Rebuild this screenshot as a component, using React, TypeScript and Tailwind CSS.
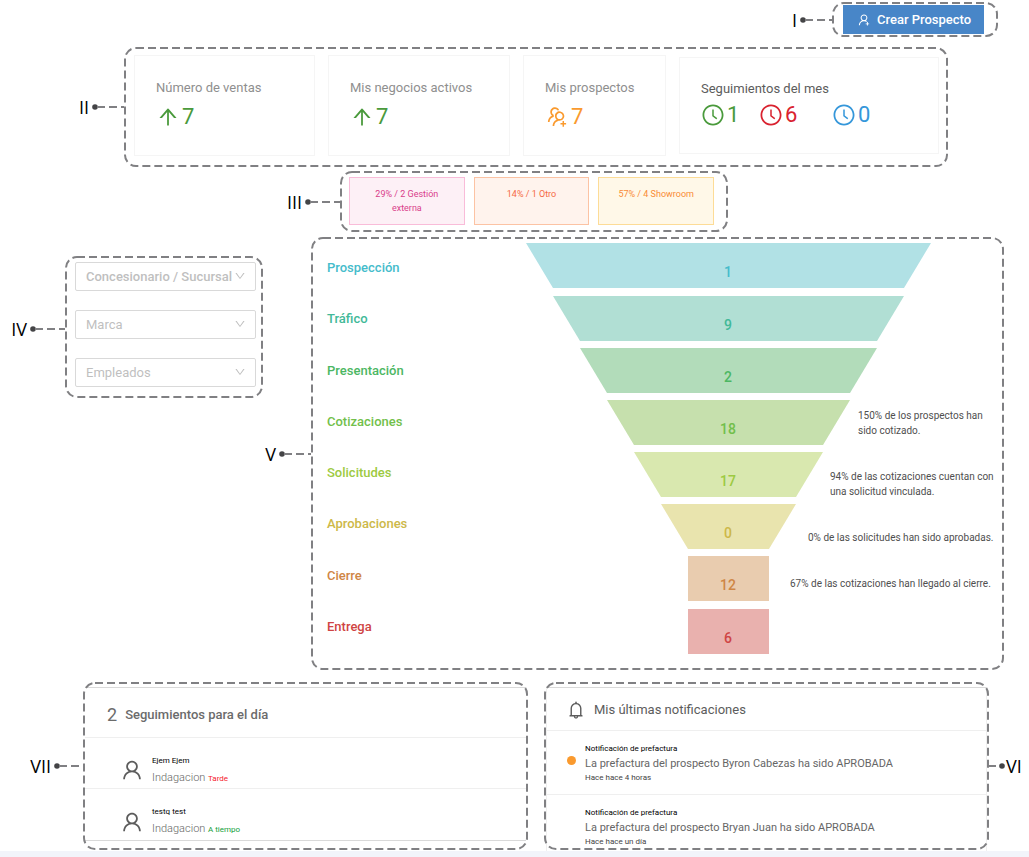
import type { ReactNode } from "react";
import {
  AiOutlineArrowUp,
  AiOutlineBell,
  AiOutlineClockCircle,
  AiOutlineDown,
  AiOutlineUser,
  AiOutlineUserAdd,
  AiOutlineUsergroupAdd,
} from "react-icons/ai";

const DASH = "8 4";
const DASH_COLOR = "#808083";

/** Rounded dashed outline drawn over the edge of a section. */
function Frame({ className, children }: { className: string; children: ReactNode }) {
  return (
    <section className={`relative ${className}`}>
      {children}
      <svg className="pointer-events-none absolute inset-px h-[calc(100%-2px)] w-[calc(100%-2px)] overflow-visible" aria-hidden="true">
        <rect width="100%" height="100%" rx="11" fill="none" stroke={DASH_COLOR} strokeWidth="2" strokeDasharray={DASH} />
      </svg>
    </section>
  );
}

function Leader({ width }: { width: string }) {
  return (
    <svg className={`h-2 shrink-0 ${width}`} aria-hidden="true">
      <circle cx="3" cy="4" r="2.8" fill="#444446" />
      <path d="M5 4H40" stroke={DASH_COLOR} strokeWidth="2" strokeDasharray={DASH} />
    </svg>
  );
}

function Callout({ label, className, leader = "w-8" }: { label: string; className: string; leader?: string }) {
  return (
    <div className={`flex shrink-0 items-center justify-end gap-[3px] ${className}`}>
      <span className="font-['Open_Sans',sans-serif] text-[18px] leading-6 text-black">{label}</span>
      <Leader width={leader} />
    </div>
  );
}

function StatCard({ title, value, color, icon }: { title: string; value: number; color: string; icon: ReactNode }) {
  return (
    <article className="h-[101px] border border-[#f5f5f5] pt-[22px] pl-[21px]">
      <h2 className="text-[13px] leading-5 text-[#8f8f8f]">{title}</h2>
      <p className={`flex items-center gap-[2px] pt-[5px] text-[22px] leading-7 ${color}`}>
        {icon}
        {value}
      </p>
    </article>
  );
}

const sources = [
  { text: "29% / 2 Gestión externa", style: "border-[#f9bcd9] bg-[#fdf0f6] text-[#d9408b]" },
  { text: "14% / 1 Otro", style: "border-[#fcc3a4] bg-[#fff3ed] text-[#f56a45]" },
  { text: "57% / 4 Showroom", style: "border-[#fddc97] bg-[#fff8e8] text-[#f98b35]" },
];

const filters = [
  { label: "Concesionario / Sucursal", weight: "font-medium" },
  { label: "Marca", weight: "font-normal" },
  { label: "Empleados", weight: "font-normal" },
];

const stages = [
  { name: "Prospección", value: 1, text: "text-[#45bccb]", color: "#45bccb", fill: "#b1e1e5", points: "0,0 405,0 378,45 27,45" },
  { name: "Tráfico", value: 9, text: "text-[#42b998]", color: "#42b998", fill: "#b1dfd4", points: "27,53 378,53 351,98 54,98" },
  { name: "Presentación", value: 2, text: "text-[#4cb763]", color: "#4cb763", fill: "#b2dcba", points: "54,105 351,105 324,150 81,150" },
  { name: "Cotizaciones", value: 18, text: "text-[#72bf4b]", color: "#72bf4b", fill: "#c6e0ad", points: "81,157 324,157 297,202 108,202" },
  { name: "Solicitudes", value: 17, text: "text-[#9dca42]", color: "#9dca42", fill: "#d9e8af", points: "108,209 297,209 270,254 135,254" },
  { name: "Aprobaciones", value: 0, text: "text-[#cdb849]", color: "#cdb849", fill: "#e9e4ae", points: "135,261 270,261 243,306 162,306" },
  { name: "Cierre", value: 12, text: "text-[#cf8646]", color: "#cf8646", fill: "#e9ccaf", points: "162,313 243,313 243,358 162,358" },
  { name: "Entrega", value: 6, text: "text-[#cf4444]", color: "#cf4444", fill: "#e9b1ae", points: "162,366 243,366 243,411 162,411" },
];
const stageTops = [0, 53, 105, 157, 209, 261, 313, 366];

const notes = [
  { text: "150% de los prospectos han sido cotizado.", indent: "pl-[332px] pr-4" },
  { text: "94% de las cotizaciones cuentan con una solicitud vinculada.", indent: "pl-[304px] pr-1" },
  { text: "0% de las solicitudes han sido aprobadas.", indent: "pl-[282px]" },
  { text: "67% de las cotizaciones han llegado al cierre.", indent: "pl-[264px]" },
];

const followUps = [
  { name: "Ejem Ejem", status: "Tarde", color: "text-[#f5222d]" },
  { name: "testq test", status: "A tiempo", color: "text-[#12a03a]" },
];

const notifications = [
  { text: "La prefactura del prospecto Byron Cabezas ha sido APROBADA", when: "Hace hace 4 horas", unread: true },
  { text: "La prefactura del prospecto Bryan Juan ha sido APROBADA", when: "Hace hace un día", unread: false },
];

const monthly = [
  { value: 1, color: "text-[#4a9a3c]", space: "w-[58px]" },
  { value: 6, color: "text-[#d9222f]", space: "w-[73px]" },
  { value: 0, color: "text-[#3597da]", space: "w-[58px]" },
];

export default function App() {
  return (
    <main className="flex min-h-screen flex-col bg-white pt-[2px] font-[Roboto,sans-serif]">
      <div className="flex justify-end pr-[31px]">
        <Callout label="I" className="w-16" />
        <Frame className="flex items-center py-[3px] pr-[14px] pl-[11px]">
          <button className="flex h-[29px] w-[141px] items-center gap-[6px] bg-[#4886c8] pl-[14px] text-[13px] font-medium text-white">
            <AiOutlineUserAdd className="size-[14px]" />
            <span className="whitespace-nowrap">Crear Prospecto</span>
          </button>
        </Frame>
      </div>

      <div className="mt-[10px] flex pr-[81px]">
        <Callout label="II" className="w-[124px]" />
        <Frame className="grid h-[120px] flex-1 grid-cols-[181fr_182fr_143fr_260fr] items-start gap-[13px] pt-2 pr-[9px] pl-[10px]">
          <StatCard title="Número de ventas" value={7} color="text-[#4a9a3c]" icon={<AiOutlineArrowUp className="size-6" />} />
          <StatCard title="Mis negocios activos" value={7} color="text-[#4a9a3c]" icon={<AiOutlineArrowUp className="size-6" />} />
          <StatCard title="Mis prospectos" value={7} color="text-[#fa9a2e]" icon={<AiOutlineUsergroupAdd className="size-6" />} />
          <article className="mt-[2px] h-[97px] border border-[#f5f5f5] pt-[21px] pl-[21px]">
            <h2 className="text-[13px] leading-5 text-[#5c5c5c]">Seguimientos del mes</h2>
            <ul className="flex pt-[2px] text-[22px] leading-7">
              {monthly.map((m) => (
                <li key={m.value} className={`flex items-center gap-[2px] ${m.color} ${m.space}`}>
                  <AiOutlineClockCircle className="size-6" />
                  {m.value}
                </li>
              ))}
            </ul>
          </article>
        </Frame>
      </div>

      <div className="mt-1 flex">
        <Callout label="III" className="w-[340px]" leader="w-[35px]" />
        <Frame className="flex h-[61px] w-[388px] gap-[9px] pt-[6px] pr-[14px] pl-[9px]">
          {sources.map((s) => (
            <div key={s.text} className={`h-12 flex-1 border px-4 pt-[9px] text-center text-[9px] leading-[14px] ${s.style}`}>
              {s.text}
            </div>
          ))}
        </Frame>
      </div>

      <div className="mt-[5px] flex pr-[25px]">
        <div className="flex items-start pt-[19px]">
          <div className="flex">
            <Callout label="IV" className="w-[65px] pt-1" leader="w-[35px]" />
            <Frame className="flex h-[142px] w-[198px] flex-col gap-[19px] pt-[6px] pr-[7px] pl-[10px]">
              {filters.map((f) => (
                <label key={f.label} className="relative block">
                  <select
                    aria-label={f.label}
                    className={`block h-[29px] w-full appearance-none rounded-[2px] border border-[#d9d9d9] bg-white pl-[10px] text-[13px] text-[#bfbfbf] outline-none ${f.weight}`}
                  >
                    <option>{f.label}</option>
                  </select>
                  <AiOutlineDown className="pointer-events-none absolute top-2 right-[10px] size-3 text-[#bfbfbf]" />
                </label>
              ))}
            </Frame>
          </div>
        </div>

        <Callout label="V" className="w-12" />
        <Frame className="grid h-[433px] flex-1 grid-cols-[215px_1fr] pt-[6px]">
          <ul className="col-start-1 row-start-1 mt-[15px] flex h-[379px] flex-col justify-between pl-4">
            {stages.map((s) => (
              <li key={s.name} className={`text-[13px] leading-5 font-medium ${s.text}`}>
                {s.name}
              </li>
            ))}
          </ul>
          <svg className="col-start-2 row-start-1 h-[411px] w-[405px]" viewBox="0 0 405 411" role="img" aria-label="Embudo">
            {stages.map((s, i) => (
              <g key={s.name}>
                <polygon points={s.points} fill={s.fill} />
                <text x="202" y={stageTops[i] + 34} textAnchor="middle" fill={s.color} className="text-[14px] font-medium">
                  {s.value}
                </text>
              </g>
            ))}
          </svg>
          <ul className="col-start-2 row-start-1 flex flex-col gap-[31px] pt-[165px] text-[10px] leading-[15px] text-[#4f4f4f]">
            {notes.map((n) => (
              <li key={n.text} className={n.indent}>
                {n.text}
              </li>
            ))}
          </ul>
        </Frame>
      </div>

      <div className="mt-3 flex">
        <Callout label="VII" className="w-[83px]" leader="w-[29px]" />
        <Frame className="h-[168px] flex-1 px-[2px] pt-[5px]">
          <div className="border-y border-[#d9d9d9]">
            <h2 className="flex h-[50px] items-center gap-2 border-b border-[#efefef] pt-1 pl-[22px] text-[13px] font-medium text-[#6b6b6b]">
              <span className="text-[18px] font-normal">2</span>
              Seguimientos para el día
            </h2>
            <ul className="divide-y divide-[#efefef]">
              {followUps.map((f) => (
                <li key={f.name} className="flex h-[51px] items-center gap-2 pt-[14px] pl-[35px]">
                  <AiOutlineUser className="size-6 text-[#5c5c5c]" />
                  <div>
                    <p className="text-[8px] leading-4 text-black">{f.name}</p>
                    <p className="text-[11px] leading-[18px] font-light text-[#666]">
                      Indagacion <span className={`text-[8px] font-normal ${f.color}`}>{f.status}</span>
                    </p>
                  </div>
                </li>
              ))}
            </ul>
          </div>
        </Frame>

        <Frame className="ml-4 h-[168px] flex-1 px-[2px] pt-[5px]">
          <div className="h-[164px] border-x border-t border-[#d9d9d9] border-x-[#efefef]">
            <h2 className="flex h-[43px] items-center gap-2 border-b border-[#efefef] pt-[2px] pl-[19px] text-[13px] text-[#5c5c5c]">
              <AiOutlineBell className="size-5" />
              Mis últimas notificaciones
            </h2>
            <ul className="divide-y divide-[#efefef]">
              {notifications.map((n) => (
                <li key={n.when} className="flex h-16 items-start gap-[9px] pt-[11px] pl-5">
                  <span className={`mt-[14px] size-[9px] rounded-full ${n.unread ? "bg-[#fa9a2e]" : "bg-transparent"}`} />
                  <div>
                    <p className="text-[8px] leading-[14px] text-black">Notificación de prefactura</p>
                    <p className="text-[11px] leading-[15px] text-[#666]">{n.text}</p>
                    <p className="text-[8px] leading-[14px] text-[#444]">{n.when}</p>
                  </div>
                </li>
              ))}
            </ul>
          </div>
        </Frame>

        <div className="flex w-10 shrink-0 items-center">
          <svg className="h-2 w-4 shrink-0" viewBox="0 0 16 8" aria-hidden="true">
            <path d="M0 4H7" stroke={DASH_COLOR} strokeWidth="2" />
            <circle cx="13" cy="4" r="2.8" fill="#444446" />
          </svg>
          <span className="pl-px font-['Open_Sans',sans-serif] text-[18px] leading-6 text-black">VI</span>
        </div>
      </div>

      <footer className="mt-px h-[6px] bg-[#f2f4fa]" />
    </main>
  );
}
